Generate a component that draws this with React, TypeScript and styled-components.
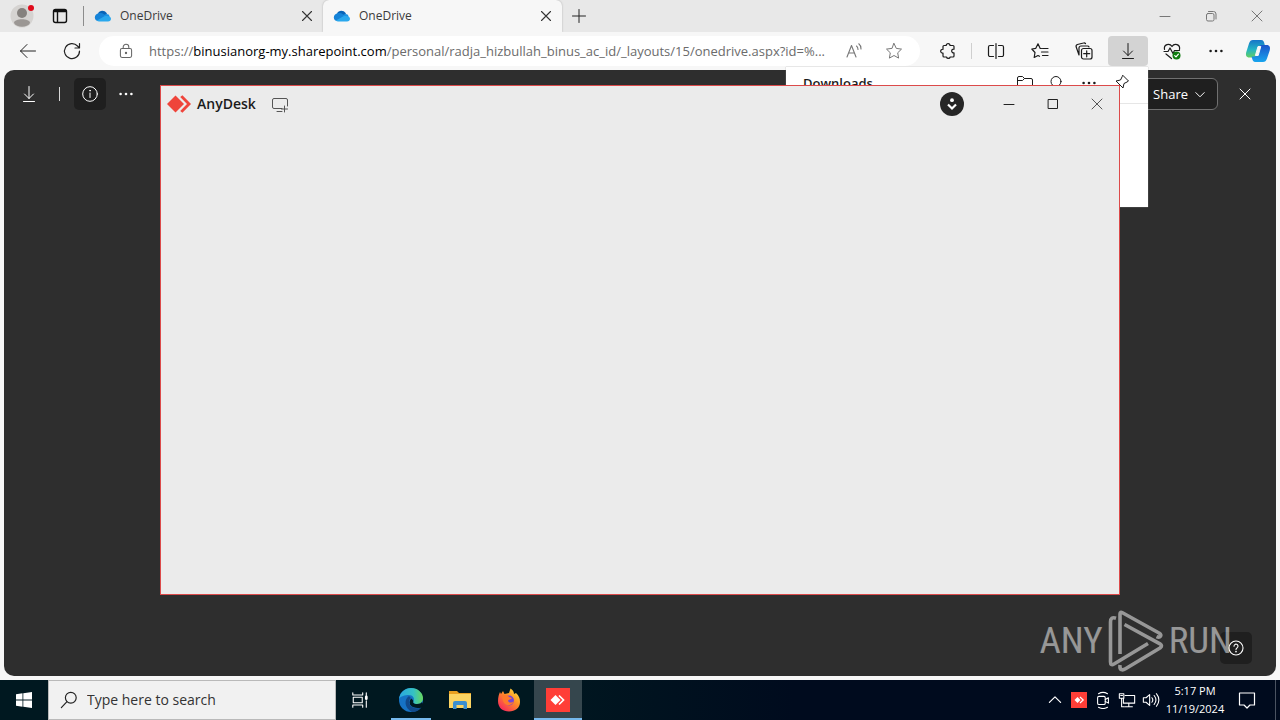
import React from 'react';
import styled, { createGlobalStyle } from 'styled-components';

const ui = '"Open Sans", "Noto Sans", sans-serif';

const GlobalStyle = createGlobalStyle`
  * { box-sizing: border-box; }
  body { margin: 0; font-family: ${ui}; color: #1b1b1b; background: #f7f7f7; }
  button, input { font: inherit; color: inherit; }
  svg { display: block; flex: none; }
`;

const Desktop = styled.div`
  position: relative;
  display: flex;
  flex-direction: column;
  min-height: 100vh;
  overflow: hidden;
`;

const PlainButton = styled.button`
  display: flex;
  align-items: center;
  justify-content: center;
  flex: none;
  padding: 0;
  border: 0;
  background: transparent;
`;

/* Browser */
const Browser = styled.div`
  flex: 1;
  display: flex;
  flex-direction: column;
  background: #f7f7f7;
`;

const TabStrip = styled.header`
  display: flex;
  height: 32px;
  background: #e8e8e8;
`;

const StripButton = styled(PlainButton)<{ $w: number }>`
  width: ${p => p.$w}px;
  height: 32px;
`;

const StripDivider = styled.div`
  width: 1px;
  height: 20px;
  margin: 6px 0 0 7px;
  background: #8c8c8c;
`;

const Tab = styled.div<{ $active?: boolean }>`
  flex: 0 1 239px;
  display: flex;
  align-items: center;
  gap: 8px;
  height: 32px;
  padding: 0 7px 0 10px;
  font-size: 12px;
  line-height: 16px;
  color: #3b3b3b;
  border-radius: 6px 6px 0 0;
  background: ${p => (p.$active ? '#f7f7f7' : 'transparent')};
  box-shadow: ${p => (p.$active ? '0 0 2px #a8a8a8' : 'none')};
`;

const TabTitle = styled.span`
  flex: 1;
`;

const Spacer = styled.div`
  flex: 1;
`;

const Toolbar = styled.nav`
  position: relative;
  display: flex;
  align-items: center;
  height: 38px;
  padding: 0 2px 0 6px;
  background: #f7f7f7;
`;

const ToolButton = styled(PlainButton)<{ $pressed?: boolean }>`
  width: 40px;
  height: 30px;
  margin: 0 2px;
  border-radius: 4px;
  background: ${p => (p.$pressed ? '#d3d3d3' : 'transparent')};
`;

const CopilotButton = styled(ToolButton)`
  margin: 0;
`;

const ToolDivider = styled.div`
  width: 1px;
  height: 16px;
  margin: 0 2px 0 1px;
  background: #cfcfcf;
`;

const AddressBar = styled.div`
  flex: 1;
  min-width: 0;
  display: flex;
  align-items: center;
  height: 30px;
  margin: 0 6px 0 5px;
  padding: 0 6px 0 19px;
  border-radius: 15px;
  background: #fff;
`;

const ActionButton = styled(ToolButton)`
  width: 36px;
`;

const Url = styled.div`
  flex: 1;
  min-width: 0;
  margin: 0 0 0 15px;
  white-space: nowrap;
  font-size: 13px;
  line-height: 20px;
  color: #6b6b6b;
  outline: 0;
`;

const Host = styled.span`
  color: #000;
`;

const Viewer = styled.main`
  position: relative;
  flex: 1;
  display: flex;
  flex-direction: column;
  justify-content: space-between;
  margin: 0 4px 4px;
  border-radius: 10px;
  background: #2e2e2e;
  color: #fff;
`;

const ViewerBar = styled.div`
  display: flex;
  align-items: center;
  padding: 8px 15px 0 9px;
`;

const ViewerButton = styled(PlainButton)<{ $on?: boolean }>`
  width: 32px;
  height: 32px;
  border-radius: 5px;
  background: ${p => (p.$on ? '#1f1f1f' : 'transparent')};
`;

const ViewerDivider = styled.div`
  width: 1px;
  height: 14px;
  margin: 0 14px;
  background: #d8d8d8;
`;

const ViewerMore = styled(ViewerButton)`
  margin-left: 4px;
`;

const ShareButton = styled(PlainButton)`
  gap: 5px;
  height: 32px;
  margin-right: 11px;
  padding: 0 10px 0 32px;
  border: 1px solid #707070;
  border-radius: 6px;
  background: #1f1f1f;
  font-size: 13px;
  line-height: 20px;
`;

const ViewerFoot = styled.div`
  display: flex;
  justify-content: flex-end;
  padding: 0 24px 12px;
`;

const Flyout = styled.section`
  position: absolute;
  top: 67px;
  right: 132px;
  width: 362px;
  height: 140px;
  background: #fff;
  color: #1b1b1b;
  box-shadow: 0 0 1px #9b9b9b;
`;

const FlyoutHead = styled.div`
  display: flex;
  align-items: center;
  height: 37px;
  padding: 0 11px 5px 17px;
  border-bottom: 1px solid #e6e6e6;
`;

const FlyoutTitle = styled.h2`
  flex: 1;
  margin: 0;
  font-size: 13px;
  font-weight: 600;
  line-height: 20px;
`;

const FlyoutButton = styled(PlainButton)`
  width: 32px;
  height: 30px;
`;

/* AnyDesk window */
const AppWindow = styled.section`
  position: absolute;
  top: 85px;
  bottom: 125px;
  left: 160px;
  right: 160px;
  border: 1px solid #dc4a4a;
  background: #ebebeb;
`;

const AppTitleBar = styled.div`
  display: flex;
  align-items: center;
  height: 36px;
  padding: 0 0 0 6px;
`;

const AppName = styled.h1`
  margin: 0 14px 0 6px;
  font-size: 14px;
  font-weight: 600;
  line-height: 20px;
`;

const DownBadge = styled(PlainButton)`
  width: 24px;
  height: 24px;
  margin-right: 23px;
  border-radius: 50%;
  background: #262626;
`;

const AppControl = styled(PlainButton)`
  width: 44px;
  height: 36px;
`;

/* Watermark */
const Watermark = styled.div`
  position: absolute;
  right: 48px;
  bottom: 48px;
  display: flex;
  align-items: center;
  gap: 5px;
  pointer-events: none;
  font-family: "Roboto Condensed", "Liberation Sans Narrow", Roboto, sans-serif;
  font-size: 37px;
  font-weight: 400;
  line-height: 62px;
  color: #fff;
  opacity: 0.5;
`;

/* Taskbar */
const Taskbar = styled.footer`
  display: flex;
  height: 40px;
  background: linear-gradient(90deg, #001820 0%, #001820 42%, #000b1e 62%, #000b1e 100%);
  color: #fff;
`;

const TaskButton = styled(PlainButton)<{ $state?: 'open' | 'active' }>`
  position: relative;
  width: 48px;
  margin-right: 1px;
  background: ${p => (p.$state === 'active' ? '#35464d' : 'transparent')};
  &::after {
    content: '';
    position: absolute;
    bottom: 0;
    left: ${p => (p.$state === 'active' ? 0 : 4)}px;
    right: ${p => (p.$state === 'active' ? 0 : 4)}px;
    height: 2px;
    background: ${p => (p.$state ? '#76b9ed' : 'transparent')};
  }
`;

const TaskViewButton = styled(TaskButton)`
  margin-right: 3px;
`;

const StartButton = styled(PlainButton)`
  width: 48px;
`;

const SearchBox = styled.label`
  flex: 0 1 288px;
  display: flex;
  align-items: center;
  gap: 9px;
  padding: 0 11px;
  border: 1px solid #b9b9b9;
  background: #f1f1f1;
  color: #222;
`;

const SearchInput = styled.input`
  flex: 1;
  min-width: 0;
  padding: 0;
  border: 0;
  outline: 0;
  background: transparent;
  font-size: 14px;
  line-height: 20px;
  &::placeholder { color: #333; opacity: 1; }
`;

const TrayButton = styled(PlainButton)`
  width: 24px;
`;

const Clock = styled(PlainButton)`
  flex-direction: column;
  width: 64px;
  font-size: 11px;
  line-height: 18px;
`;

const NoticeButton = styled(PlainButton)`
  width: 40px;
`;

const ShowDesktop = styled(PlainButton)`
  width: 5px;
  margin-left: 8px;
  border-left: 1px solid #4a5361;
`;

type IconProps = { size?: number; sw?: number; color?: string; children: React.ReactNode };
/* Line icon on a 20 unit grid */
const Icon = ({ size = 20, sw = 1, color = 'currentColor', children }: IconProps) => (
  <svg width={size} height={size} viewBox="0 0 20 20" fill="none" stroke={color}
    strokeWidth={sw} strokeLinecap="round" strokeLinejoin="round" aria-hidden="true">
    {children}
  </svg>
);

const Cross = ({ size = 20, color, sw = 1 }: { size?: number; color?: string; sw?: number }) => (
  <Icon size={size} color={color} sw={sw}><path d="M5 5l10 10M15 5L5 15" /></Icon>
);

const Dots = ({ color = '#1b1b1b' }: { color?: string }) => (
  <svg width="20" height="20" viewBox="0 0 20 20" fill={color} aria-hidden="true">
    <circle cx="4.6" cy="10" r="1.3" /><circle cx="10" cy="10" r="1.3" /><circle cx="15.4" cy="10" r="1.3" />
  </svg>
);

const DownArrow = () => (
  <Icon><path d="M10 2.500v12M5.500 10l4.500 4.500 4.500-4.500M4.500 17.500h11" /></Icon>
);

const CloudLogo = () => (
  <svg width="18" height="18" viewBox="0 0 18 18" aria-hidden="true">
    <path d="M4 6.500C5.500 3.500 10 2.500 13 6.500L9 11z" fill="#0864b8" />
    <path d="M5 6.300c3-1 5 1 9 3.700L6 14H4.500C-.5 14-.5 7 5 6.300z" fill="#1583d8" />
    <path d="M9.500 9.200c1.500-3 5.500-2.700 6 .3L15 12z" fill="#1b91e2" />
    <path d="M3 13.600l7-4c3-1.200 7-.2 7 2 0 1.800-1.200 2.900-3 2.900H5c-.9 0-1.500-.3-2-.9z" fill="#2aa8ed" />
  </svg>
);

const AnyDeskMark = ({ width, color }: { width: number; color: string }) => (
  <svg width={width} height={width * 0.75} viewBox="0 0 24 18" aria-hidden="true">
    <path d="M8.500 .5L17 9l-8.500 8.500L0 9z" fill={color} />
    <path d="M13.200 2l2.200-1.700L24 9l-8.600 8.700-2.200-1.700L20 9z" fill={color} />
  </svg>
);

const tabs = [{ title: 'OneDrive', active: false }, { title: 'OneDrive', active: true }];

export default function App() {
  return (
    <>
      <GlobalStyle />
      <Desktop>
        <Browser>
          <TabStrip>
            <StripButton $w={44} aria-label="Profile">
              <svg width="26" height="26" viewBox="0 0 26 26" aria-hidden="true">
                <circle cx="13" cy="13" r="11.500" fill="#d5d3d1" />
                <circle cx="13" cy="10" r="5" fill="#85817e" />
                <path d="M5 20c0-5 16-5 16 0-2.500 5-13.500 5-16 0z" fill="#9b9794" />
                <circle cx="22" cy="5" r="3" fill="#e00b1c" />
              </svg>
            </StripButton>
            <StripButton $w={32} aria-label="Tab actions">
              <Icon size={20} sw={1.4} color="#111">
                <rect x="3.500" y="3.500" width="13" height="13" rx="2" />
                <path d="M4.500 5h11" strokeWidth="2.600" /><path d="M7.500 6v10" />
              </Icon>
            </StripButton>
            <StripDivider />
            {tabs.map((t, i) => (
              <Tab key={i} $active={t.active}>
                <CloudLogo />
                <TabTitle>{t.title}</TabTitle>
                <PlainButton aria-label="Close tab"><Cross size={18} color="#333" sw={1.2} /></PlainButton>
              </Tab>
            ))}
            <StripButton $w={34} aria-label="New tab">
              <Icon color="#222"><path d="M10 3.500v13M3.500 10h13" /></Icon>
            </StripButton>
            <Spacer />
            <StripButton $w={46} aria-label="Minimize"><Icon color="#777"><path d="M5 10.500h10" /></Icon></StripButton>
            <StripButton $w={46} aria-label="Restore">
              <Icon color="#777"><rect x="5.500" y="7.500" width="7.500" height="7.500" rx="1.500" /><path d="M7.500 5.500h5a2.500 2.500 0 012.500 2.500v5" /></Icon>
            </StripButton>
            <StripButton $w={46} aria-label="Close"><Cross color="#777" /></StripButton>
          </TabStrip>

          <Toolbar>
            <ToolButton aria-label="Back"><Icon color="#222"><path d="M17.500 10H2.500M9 3.500L2.500 10 9 16.500" /></Icon></ToolButton>
            <ToolButton aria-label="Refresh">
              <Icon color="#222" sw={1.200}><path d="M17.500 10A7.500 7.500 0 1115.500 5l1.800 1.800M17.500 2.500v4.500H13" /></Icon>
            </ToolButton>
            <AddressBar>
              <Icon size={16} color="#666" sw={1.300}>
                <rect x="3" y="7" width="14" height="11" rx="2" /><path d="M6.500 7V5a3.500 3.500 0 017 0v2" />
                <circle cx="10" cy="12.500" r=".8" fill="#666" />
              </Icon>
              <Url role="textbox" aria-label="Address" tabIndex={0}>
                https://<Host>binusianorg-my.sharepoint.com</Host>/personal/radja_hizbullah_binus_ac_id/_layouts/15/onedrive.aspx?id=%...
              </Url>
              <ActionButton aria-label="Read aloud">
                <Icon color="#777" sw={1.100}><path d="M3 16L7.500 4.500 12 16M4.600 12h5.800M12.500 5c1 .8 1.500 2 1.500 3.500M14.800 2.800c1.600 1.200 2.200 3 2.200 5.200" /></Icon>
              </ActionButton>
              <ActionButton aria-label="Favorite">
                <Icon color="#777"><path d="M10 2.500l2.300 4.900 5.200.7-3.800 3.700.9 5.300L10 14.500l-4.600 2.600.9-5.300L2.500 8.100l5.200-.7z" /></Icon>
              </ActionButton>
            </AddressBar>
            <ToolButton aria-label="Extensions">
              <Icon sw={1.200}><path d="M6 4.500h2.200a1.900 1.900 0 113.800 0h3a1 1 0 011 1V8.200a1.900 1.900 0 100 3.700v3.100a1 1 0 01-1 1h-2.800a1.900 1.900 0 01-3.700 0H6a1 1 0 01-1-1v-3a1.900 1.900 0 110-3.700V5.500a1 1 0 011-1z" /></Icon>
            </ToolButton>
            <ToolDivider />
            <ToolButton aria-label="Split screen">
              <Icon sw={1.200}><path d="M7.500 4.500H4a1.500 1.500 0 00-1.500 1.500v8A1.500 1.500 0 004 15.500h3.500M12.500 4.500H16A1.500 1.500 0 0117.500 6v8a1.500 1.500 0 01-1.500 1.500h-3.500M10 2.500v15" /></Icon>
            </ToolButton>
            <ToolButton aria-label="Favorites">
              <Icon sw={1.200}><path d="M11.500 7.500h-1.300L8 2.800 5.800 7.300l-4 .7L5 11.500l-.8 5L8 14.500l1.500.8M12.500 7.500h5.500M11.500 11h6.500M12.500 14.500h5.500" /></Icon>
            </ToolButton>
            <ToolButton aria-label="Collections">
              <Icon sw={1.200}><rect x="7.500" y="7.500" width="10.500" height="10.500" rx="2" /><path d="M12.700 9.800v6M9.700 12.700h6M5 14L2.200 6a2 2 0 011.200-2.500L9.500 2a2 2 0 012 .5M5 14V7a2 2 0 012-2h6.500a1.500 1.500 0 011.500 1" /></Icon>
            </ToolButton>
            <ToolButton $pressed aria-label="Downloads"><DownArrow /></ToolButton>
            <ToolButton aria-label="Browser essentials">
              <Icon sw={1.200}>
                <path d="M2.500 8.500c-1-5 5-7 7.500-3 2.500-4 8.500-2 7.500 3M2 10.500h4l2-3.500 3 5.500 1.500-3h5M4 13l5.500 4.500" />
                <circle cx="14.500" cy="14.500" r="4" fill="#107c10" stroke="none" /><path d="M12.700 14.600l1.300 1.300 2.400-2.700" stroke="#fff" />
              </Icon>
            </ToolButton>
            <ToolButton aria-label="Settings"><Dots /></ToolButton>
            <CopilotButton aria-label="Copilot">
              <svg width="26" height="26" viewBox="0 0 26 26" aria-hidden="true">
                <defs>
                  <linearGradient id="copA" x1="0" y1="0" x2="0" y2="1"><stop stopColor="#1675c9" /><stop offset=".55" stopColor="#24b5c4" /><stop offset="1" stopColor="#63cf60" /></linearGradient>
                  <linearGradient id="copB" x1="0" y1="0" x2="0" y2="1"><stop stopColor="#1c54c9" /><stop offset="1" stopColor="#18a5ee" /></linearGradient>
                </defs>
                <path d="M8 2h8c2.500 0 3 2 3.500 4l.5 2h-3c-2 0-3 1-3.500 3l-1.500 6c-.6 2-1.500 2.500-3 2.500H4.500C1 19.500.5 17 1.300 14L4 5.500C4.800 3 6 2 8 2z" fill="url(#copA)" />
                <path d="M18 24h-7.500C8 24 7.500 22 7 20l-.5-1.500H9c2 0 3-1 3.500-3L14 9.500C14.600 7.500 15.500 7 17 7h4.500c3.500 0 4 2.500 3.200 5.500L22 20.500c-.8 2.500-2 3.500-4 3.500z" fill="url(#copB)" />
                <path d="M13 8.500h2.800l-2.600 9h-2.800z" fill="#f7f7f7" stroke="#f7f7f7" strokeLinejoin="round" />
              </svg>
            </CopilotButton>
          </Toolbar>

          <Viewer>
            <ViewerBar>
              <ViewerButton aria-label="Download file"><DownArrow /></ViewerButton>
              <ViewerDivider />
              <ViewerButton $on aria-label="Details">
                <Icon><circle cx="10" cy="10" r="7.300" /><path d="M10 9v4.500" /><circle cx="10" cy="6.700" r=".4" /></Icon>
              </ViewerButton>
              <ViewerMore aria-label="More"><Dots color="#fff" /></ViewerMore>
              <Spacer />
              <ShareButton>Share<Icon size={14}><path d="M4 8l6 6 6-6" strokeWidth="1.400" /></Icon></ShareButton>
              <ViewerButton aria-label="Close file"><Cross /></ViewerButton>
            </ViewerBar>
            <ViewerFoot>
              <ViewerButton $on aria-label="Help">
                <Icon size={18} sw={1.200}><circle cx="10" cy="10" r="7.800" /><path d="M7.800 8a2.200 2.200 0 114 1.200c-.9.900-1.800 1.200-1.800 2.600" /><circle cx="10" cy="14" r=".4" /></Icon>
              </ViewerButton>
            </ViewerFoot>
          </Viewer>
        </Browser>

        <Flyout aria-label="Downloads">
          <FlyoutHead>
            <FlyoutTitle>Downloads</FlyoutTitle>
            <FlyoutButton aria-label="Open folder"><Icon><path d="M2.500 16V5A1.500 1.500 0 014 3.500h3.500l2 2H16A1.500 1.500 0 0117.500 7v9zM2.500 7.500h5l2-2" /></Icon></FlyoutButton>
            <FlyoutButton aria-label="Search downloads"><Icon><circle cx="9" cy="8.500" r="5" /><path d="M13 12.500l4 4" /></Icon></FlyoutButton>
            <FlyoutButton aria-label="More options"><Dots /></FlyoutButton>
            <FlyoutButton aria-label="Pin"><Icon><path d="M12 2.500l5.500 5.500-1.500 1-3 1.500-1 4.500L5 8l4.500-1L11 4zM8.500 11.500L3 17" /></Icon></FlyoutButton>
          </FlyoutHead>
        </Flyout>

        <AppWindow aria-label="AnyDesk">
          <AppTitleBar>
            <AnyDeskMark width={24} color="#ef443b" />
            <AppName>AnyDesk</AppName>
            <PlainButton aria-label="New session">
              <Icon size={20} color="#555"><path d="M12 14.500H4A1.500 1.500 0 012.500 13V6A1.500 1.500 0 014 4.500h12A1.500 1.500 0 0117.500 6v6M14.500 12v6M11.500 15h6M7 17.500h5" /></Icon>
            </PlainButton>
            <Spacer />
            <DownBadge aria-label="Install">
              <svg width="24" height="24" viewBox="0 0 24 24" aria-hidden="true">
                <circle cx="12" cy="8.200" r="1.900" fill="#fff" /><path d="M8 12.500l4 4 4-4" fill="none" stroke="#fff" strokeWidth="2.200" />
              </svg>
            </DownBadge>
            <AppControl aria-label="Minimize AnyDesk"><Icon color="#222"><path d="M5 10.500h10" /></Icon></AppControl>
            <AppControl aria-label="Maximize AnyDesk"><Icon color="#222"><rect x="5.500" y="5.500" width="9" height="9" /></Icon></AppControl>
            <AppControl aria-label="Close AnyDesk"><Cross color="#555" /></AppControl>
          </AppTitleBar>
        </AppWindow>

        <Watermark>
          <span>ANY</span>
          <svg width="56" height="62" viewBox="0 0 56 62" fill="none" stroke="#fff" strokeWidth="3.600" strokeLinejoin="round" strokeLinecap="butt" aria-hidden="true">
            <path d="M12 44V4q0-2.500 2.500-1.200L51 23q2.500 1.700 1.500 3.200-1.200 1.700-4 .4" />
            <path d="M8 8.200Q2.500 6.500 2.500 12v40q0 4 3.500 2l34-20.500" />
            <path d="M12 55q-.5 4.500 2 4.800 1.500.2 3.500-1L52 38q3-2.200 0-4.200L16.500 14.500" />
          </svg>
          <span>RUN</span>
        </Watermark>

        <Taskbar>
          <StartButton aria-label="Start">
            <svg width="16" height="16" viewBox="0 0 16 16" fill="#fff" aria-hidden="true">
              <path d="M0 2.200L6.500 1.300v6.300H0zM7.300 1.200L16 0v7.600H7.300zM0 8.400h6.500v6.300L0 13.800zM7.300 8.400H16V16l-8.700-1.200z" />
            </svg>
          </StartButton>
          <SearchBox>
            <Icon size={18} sw={1.300}><circle cx="12" cy="7.500" r="6" /><path d="M7.500 12L1.500 18.500" /></Icon>
            <SearchInput aria-label="Type here to search" placeholder="Type here to search" />
          </SearchBox>
          <TaskViewButton aria-label="Task View">
            <Icon size={18} sw={1.200}><path d="M2 2v2.500h11V2M2 18v-2.500h11V18M2.500 7h10v6h-10zM17 2v3M17 11v7" /><path d="M17 6.500v2" strokeWidth="3" /></Icon>
          </TaskViewButton>
          <TaskButton $state="open" aria-label="Edge">
            <svg width="26" height="26" viewBox="0 0 26 26" aria-hidden="true">
              <defs>
                <linearGradient id="edA" x1="0" x2="1"><stop stopColor="#2aa7e0" /><stop offset=".6" stopColor="#35c1c4" /><stop offset="1" stopColor="#69d85c" /></linearGradient>
              </defs>
              <circle cx="13" cy="13" r="12" fill="#1673c5" />
              <path d="M1 12C2 5 7 1 13 1c7 0 12 5 12 10 0 4-3 6-6 6-3.500 0-4.500-1.500-3.500-3 1.500-3-1-6-4.500-6-4 0-8.500 1-10 4z" fill="url(#edA)" />
              <path d="M15.500 14c-1 1.500 0 3 3.500 3 2.500 0 4.500-1 5-2l1.500 3-2 2.500c-3 1-9 1-11.500-3-1-3 0-5 1.500-6z" fill="#001820" />
              <path d="M11 9c-5 3-5 12 3 16 4 0 7-1.500 9.500-4.500-3 1.500-8 1-10.500-1.500-2.500-2.600-2.500-6 0-8z" fill="#114a8b" />
            </svg>
          </TaskButton>
          <TaskButton aria-label="File Explorer">
            <svg width="24" height="22" viewBox="0 0 24 22" aria-hidden="true">
              <path d="M1 2h8l2 2h12v14H1z" fill="#e9a020" /><path d="M1 5h22v14H1z" fill="#fcd462" />
              <path d="M5 20v-6q0-2 2-2h10q2 0 2 2v6h-3.500v-4h-7v4z" fill="#3b8fd0" />
            </svg>
          </TaskButton>
          <TaskButton aria-label="Firefox">
            <svg width="24" height="24" viewBox="0 0 24 24" aria-hidden="true">
              <defs>
                <linearGradient id="ffA" x1="1" y1="0" x2=".2" y2="1"><stop stopColor="#fff044" /><stop offset=".45" stopColor="#ff9326" /><stop offset="1" stopColor="#f7245d" /></linearGradient>
              </defs>
              <path d="M3 4l1 2 2-3 1.500 3L12 5l1.500-4.500C16 2 17 4 17 6l2-1c3 3 4 5 4 9 0 6-5 9.500-11 9.500S1 20 1 13c0-4 1-7 2-9z" fill="url(#ffA)" />
              <circle cx="12" cy="12.500" r="5" fill="#7544d8" /><path d="M5 8c3-2 6-1 7 1l3 1c-1 2-4 1-4 3 1 2 4 2 6 0-1 5-9 6-11 0z" fill="#ff7a2b" />
            </svg>
          </TaskButton>
          <TaskButton $state="active" aria-label="AnyDesk">
            <svg width="24" height="24" viewBox="0 0 24 24" aria-hidden="true">
              <path d="M0 0h24v24H0z" fill="#ff3e37" /><path d="M9.500 7l5 5-5 5-5-5z" fill="#fff" /><path d="M13 7.500l4.500 4.500-4.500 4.500" fill="none" stroke="#fff" strokeWidth="1.700" />
            </svg>
          </TaskButton>
          <Spacer />
          <TrayButton aria-label="Show hidden icons"><Icon size={16} sw={1.500}><path d="M3 13l7-7 7 7" /></Icon></TrayButton>
          <TrayButton aria-label="AnyDesk status">
            <svg width="16" height="16" viewBox="0 0 16 16" aria-hidden="true">
              <path d="M0 0h16v16H0z" fill="#ff3e37" /><path d="M6.500 5l3 3-3 3-3-3z" fill="#fff" /><path d="M9 5l3.200 3L9 11" fill="none" stroke="#fff" strokeWidth="1.200" />
            </svg>
          </TrayButton>
          <TrayButton aria-label="Meet now">
            <Icon size={18} sw={1.200}><rect x="4" y="6" width="8.500" height="9" rx="1.500" /><path d="M12.500 9.500l3.500-2v6l-3.500-2M5 3q5-3 10 0M5 18q5 3 10 0" /></Icon>
          </TrayButton>
          <TrayButton aria-label="Network">
            <Icon size={18} sw={1.200}><path d="M8 5h10.500v8.500H6V9M12 13.500v3.500M8 17.500h8M1.500 3h5v5h-5zM3 5h2M4 8v9.500h3" /></Icon>
          </TrayButton>
          <TrayButton aria-label="Volume">
            <Icon size={18} sw={1.200}><path d="M1.500 7.500h3L8.500 4v12l-4-3.500h-3zM11 7.500q2 2.500 0 5M13.500 5q4 5 0 10M16 3q5.500 7 0 14" /></Icon>
          </TrayButton>
          <Clock><span>5:17 PM</span><span>11/19/2024</span></Clock>
          <NoticeButton aria-label="Notifications"><Icon size={20} sw={1.200}><path d="M2.500 3h15v12h-4.500L10 18l-3-3H2.500z" /></Icon></NoticeButton>
          <ShowDesktop aria-label="Show desktop" />
        </Taskbar>
      </Desktop>
    </>
  );
}
